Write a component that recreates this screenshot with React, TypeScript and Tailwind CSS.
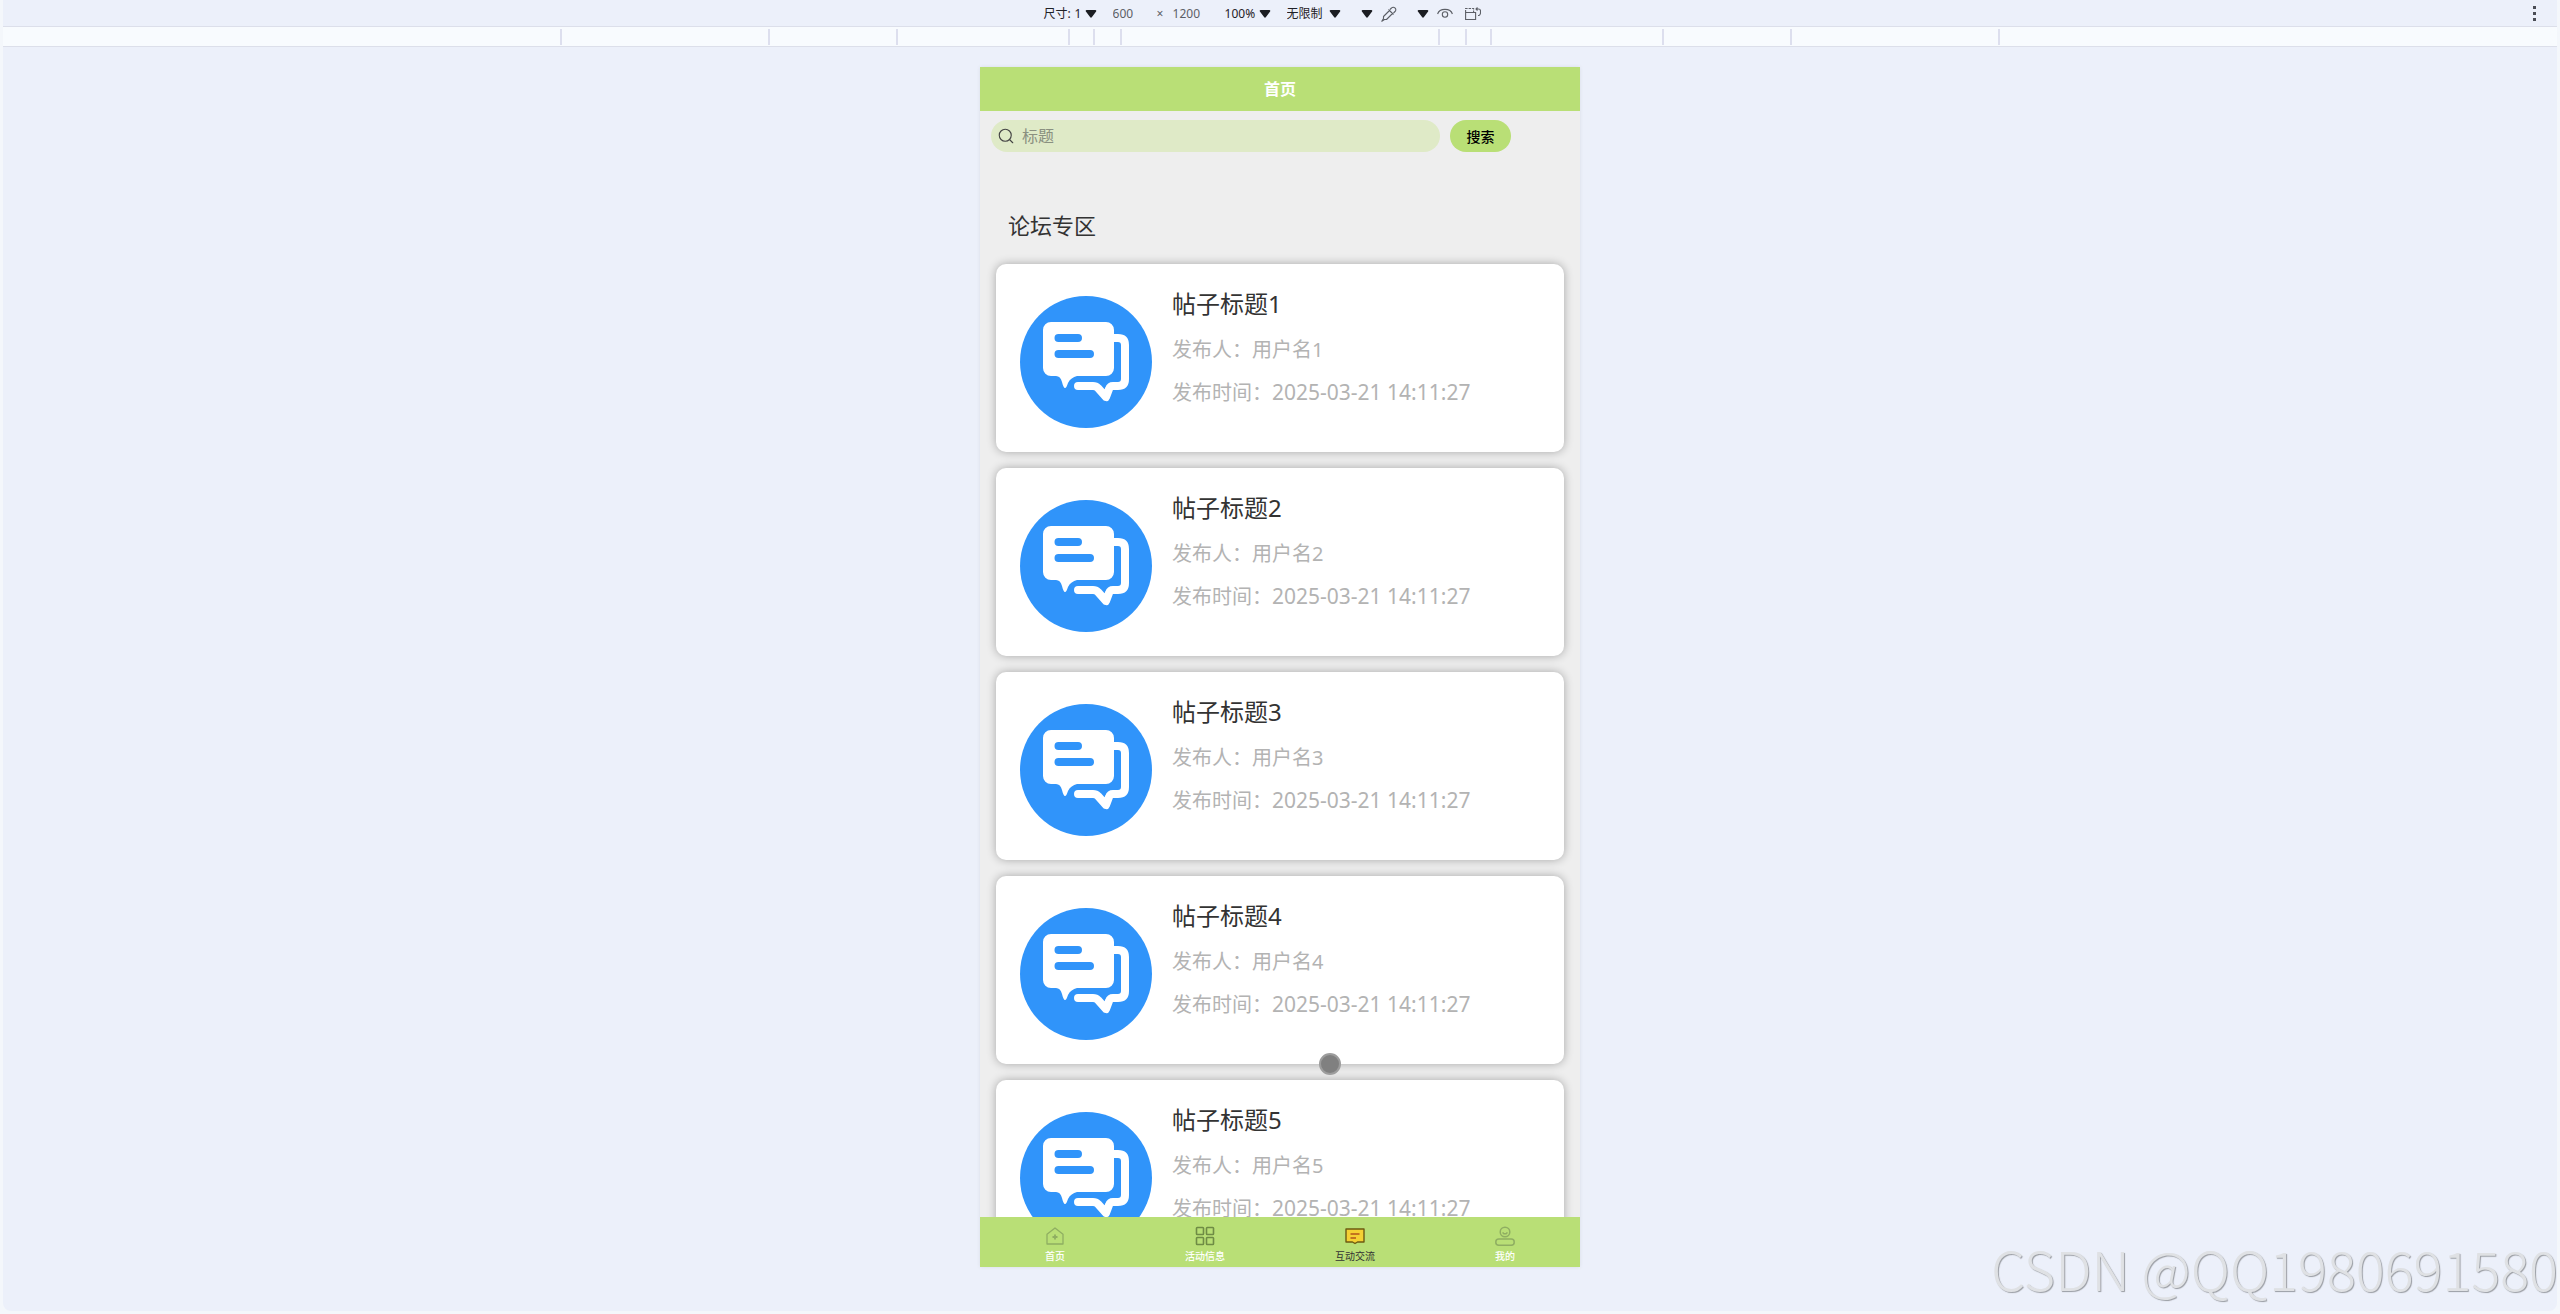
import type { ReactNode } from 'react';
import { Search } from 'lucide-react';

// Define the shape of a forum post
interface Post {
  id: number;
  title: string;
  author: string;
  time: string;
}

interface NavItem {
  label: string;
  active?: boolean;
  icon: ReactNode;
}

const posts: Post[] = [1, 2, 3, 4, 5].map((id) => ({
  id,
  title: `帖子标题${id}`,
  author: `用户名${id}`,
  time: '2025-03-21 14:11:27',
}));

const HomeIcon = () => (
  <svg className="h-5 w-5" viewBox="0 0 20 20" fill="none" stroke="#8fae62" strokeWidth="1.3" strokeLinejoin="round">
    <path d="M2 8.2 10 2l8 6.2V18H2Z" />
    <path d="M10 8.5v5M7.5 11h5" strokeWidth="1.8" />
  </svg>
);

const GridIcon = () => (
  <svg className="h-5 w-5" viewBox="0 0 20 20" fill="none" stroke="#6f8c45" strokeWidth="1.6">
    <rect x="1.5" y="1.5" width="7" height="7" rx="0.8" />
    <rect x="11.5" y="1.5" width="7" height="7" rx="0.8" />
    <rect x="1.5" y="11.5" width="7" height="7" rx="0.8" />
    <rect x="11.5" y="11.5" width="7" height="7" rx="0.8" />
  </svg>
);

const MessageIcon = () => (
  <svg className="h-5 w-5" viewBox="0 0 20 20" fill="none" strokeLinejoin="round">
    <path d="M1 3h18v13h-6.500L10 17.500 7.500 16H1Z" fill="#f5d033" stroke="#6d5a12" strokeWidth="1.4" />
    <path d="M5.500 8h9M5.500 12h5.500" stroke="#b3561a" strokeWidth="1.6" />
  </svg>
);

const UserIcon = () => (
  <svg className="h-5 w-5" viewBox="0 0 20 20" fill="none" stroke="#8fae62" strokeWidth="1.5">
    <circle cx="10" cy="6" r="4.8" />
    <path d="M8 6.2a2 1.6 0 0 0 4 0" />
    <rect x="0.8" y="13" width="18.4" height="6.2" rx="3" />
  </svg>
);

const navItems: NavItem[] = [
  { label: '首页', icon: <HomeIcon /> },
  { label: '活动信息', icon: <GridIcon /> },
  { label: '互动交流', icon: <MessageIcon />, active: true },
  { label: '我的', icon: <UserIcon /> },
];

const Caret = () => (
  <svg className="h-2 w-3 shrink-0" viewBox="0 0 12 8" fill="#1b1d22">
    <path d="M1.6 0h8.8c.8 0 1.2.8.7 1.4L6.8 7.3c-.4.6-1.2.6-1.6 0L.9 1.4C.4.8.8 0 1.6 0Z" />
  </svg>
);

const PostAvatar = () => (
  <svg className="h-33 w-33 shrink-0" viewBox="0 0 132 132">
    <circle cx="66" cy="66" r="66" fill="#3094fa" />
    <path
      d="M31 26h55a8 8 0 0 1 8 8v38a8 8 0 0 1-8 8H57c-4 1-7 3-9 7-1 3-2 5-3 5s-2-2-3-6c-1-4-3-6-6-6h-5a8 8 0 0 1-8-8V34a8 8 0 0 1 8-8Z"
      fill="#fff"
    />
    <path d="M38.500 42H58M38.500 58H70" stroke="#3094fa" strokeWidth="8" strokeLinecap="round" />
    <path
      d="M93 42h5q7 0 7 7v34q0 7-7 7h-5q-3 0-4 3l-3 8-8-9q-2-2-5-2H58"
      fill="none"
      stroke="#fff"
      strokeWidth="8"
      strokeLinecap="round"
      strokeLinejoin="round"
    />
  </svg>
);

const DeviceToolbar = () => (
  <div className="relative flex h-[26px] items-center justify-center pr-9 pt-[2px] text-[12px] leading-4 text-[#1f2126]">
    <div className="flex items-center">
      <label className="flex items-center">
        尺寸:
        <select aria-label="尺寸" className="ml-1 w-[10px] appearance-none bg-transparent">
          <option>1</option>
        </select>
        <Caret />
      </label>
      <input aria-label="宽度" defaultValue="600" className="ml-4 w-8 bg-transparent text-[#5c5f66]" />
      <span className="ml-3 w-4 text-[#5c5f66]">×</span>
      <input aria-label="高度" defaultValue="1200" className="w-12 bg-transparent text-[#5c5f66]" />
      <label className="ml-1 flex items-center">
        <select aria-label="缩放" className="w-[34px] appearance-none bg-transparent">
          <option>100%</option>
        </select>
        <Caret />
      </label>
      <label className="ml-4 flex items-center">
        <select aria-label="网络" className="mr-1 w-[38px] appearance-none bg-transparent">
          <option>无限制</option>
        </select>
        <Caret />
      </label>
      <button type="button" aria-label="传感器" className="ml-5 flex">
        <Caret />
      </button>
      <button type="button" aria-label="取色器" className="ml-2">
        <svg className="h-4 w-4" viewBox="0 0 16 16" fill="none" stroke="#5c5f66" strokeWidth="1.1" strokeLinejoin="round">
          <path d="m9 3.500 1.500-1.500a2.300 2.300 0 0 1 3.500 0 2.300 2.300 0 0 1 0 3.500L12.500 7M7.500 3.500l5 5M8.500 4.500 2.500 10.500v2L.8 15.200l2.700-1.700h2l6-6" />
        </svg>
      </button>
      <button type="button" aria-label="视觉缺陷" className="ml-5 flex">
        <Caret />
      </button>
      <button type="button" aria-label="预览" className="ml-2">
        <svg className="h-4 w-4" viewBox="0 0 16 16" fill="none" stroke="#5c5f66" strokeWidth="1.1">
          <path d="M.6 8a7.600 6 0 0 1 14.800 0" />
          <circle cx="8" cy="8.500" r="2.700" />
        </svg>
      </button>
      <button type="button" aria-label="旋转" className="ml-3">
        <svg className="h-4 w-4" viewBox="0 0 16 16" fill="none" stroke="#5c5f66" strokeWidth="1.1">
          <path d="M.6 6.500h10v7H.6Z" />
          <path d="M.6 6.500v-4h8v4" strokeDasharray="2.500 1" />
          <path d="M11 3h2.500a2 2 0 0 1 2 2v2a2.500 2.500 0 0 1-2.500 2.500M12.500 1.500 11 3l1.500 1.500" />
        </svg>
      </button>
    </div>
    <button type="button" aria-label="更多选项" className="absolute right-5 top-[6px] flex w-1 flex-col gap-[3px]">
      <span className="h-[3px] w-[3px] bg-[#4a4d55]" />
      <span className="h-[3px] w-[3px] bg-[#4a4d55]" />
      <span className="h-[3px] w-[3px] bg-[#4a4d55]" />
    </button>
  </div>
);

// Breakpoint ruler under the toolbar
const tick = 'h-4 border-[#dddfee] shrink-0';

const WidthRuler = () => (
  <div className="flex h-[21px] items-center justify-center border-y border-[#dcdfea] bg-[#f8fbfe]">
    <div className={`${tick} w-[208px] border-l-2`} />
    <div className={`${tick} w-[128px] border-l-2`} />
    <div className={`${tick} w-[172px] border-l-2`} />
    <div className={`${tick} w-[25px] border-l-2`} />
    <div className={`${tick} w-[27px] border-l-2`} />
    <div className={`${tick} w-[320px] border-x-2`} />
    <div className={`${tick} w-[27px] border-r-2`} />
    <div className={`${tick} w-[25px] border-r-2`} />
    <div className={`${tick} w-[172px] border-r-2`} />
    <div className={`${tick} w-[128px] border-r-2`} />
    <div className={`${tick} w-[208px] border-r-2`} />
  </div>
);

const PostCard = ({ post }: { post: Post }) => (
  <article className="flex h-[188px] shrink-0 gap-5 rounded-[10px] bg-white px-6 pt-8 shadow-[0_0_10px_rgba(0,0,0,0.3)]">
    <PostAvatar />
    <div className="-mt-2 flex flex-col text-[20px] text-[#b3b3b3]">
      <h3 className="text-[24px] leading-8 text-[#333]">{post.title}</h3>
      <p className="mt-[14px] leading-8">发布人：{post.author}</p>
      <p className="mt-[10px] leading-8">
        发布时间：<time className="text-[21px]">{post.time}</time>
      </p>
    </div>
  </article>
);

const App = () => {
  return (
    <div className="relative flex min-h-screen flex-col overflow-hidden bg-[#f4f7fb] px-[3px] pb-[3px] font-['Noto_Sans','Noto_Sans_CJK_SC',sans-serif]">
      <div className="flex flex-1 flex-col rounded-b-lg bg-[#ecf0fa]">
        <DeviceToolbar />
        <WidthRuler />

        <main className="mx-auto mt-5 flex h-[1200px] w-[600px] flex-col overflow-hidden bg-[#eee] shadow-[0_0_4px_rgba(0,0,0,0.08)]">
          <header className="flex h-11 shrink-0 items-center justify-center bg-[#b9df76]">
            <h1 className="text-[16px] font-bold text-white">首页</h1>
          </header>

          <form className="flex shrink-0 gap-[10px] px-[11px] pt-[9px]" onSubmit={(e) => e.preventDefault()}>
            <label className="flex h-8 w-[449px] items-center gap-[7px] rounded-full bg-[#dfeac7] px-[6px]">
              <Search className="h-[18px] w-[18px] text-[#444]" strokeWidth={1.5} />
              <input
                aria-label="标题"
                placeholder="标题"
                className="flex-1 bg-transparent text-[16px] outline-none placeholder:text-[#8a9080]"
              />
            </label>
            <button type="submit" className="h-8 w-[61px] rounded-full bg-[#b9df76] text-[14px] font-medium text-black">
              搜索
            </button>
          </form>

          <h2 className="mt-[57px] shrink-0 pl-7 text-[22px] leading-8 text-[#333]">论坛专区</h2>

          <section className="flex min-h-0 flex-1 flex-col gap-4 overflow-hidden px-4 pt-[23px]">
            {posts.map((post) => (
              <PostCard key={post.id} post={post} />
            ))}
          </section>

          <nav className="relative grid h-[50px] shrink-0 grid-cols-4 bg-[#b9df76]">
            {navItems.map((item) => (
              <a
                key={item.label}
                href="#"
                className={`flex flex-col items-center pt-[9px] text-[10px] leading-4 ${item.active ? 'text-[#333]' : 'font-medium text-white'}`}
              >
                {item.icon}
                <span className="mt-[2px]">{item.label}</span>
              </a>
            ))}
          </nav>
        </main>
      </div>

      {/* touch cursor */}
      <div className="absolute left-1/2 top-[1053px] ml-[39px] h-[22px] w-[22px] rounded-full border-2 border-[#9d9d9d] bg-[#808080]" />

      <div className="absolute bottom-2 right-[2px] font-['Noto_Sans_CJK_SC',sans-serif] text-[54px] font-light leading-[76px] text-[#dfe1e4] [text-shadow:1px_1px_1px_#9a9da3]">
        CSDN @QQ1980691580
      </div>
    </div>
  );
};

export default App;
